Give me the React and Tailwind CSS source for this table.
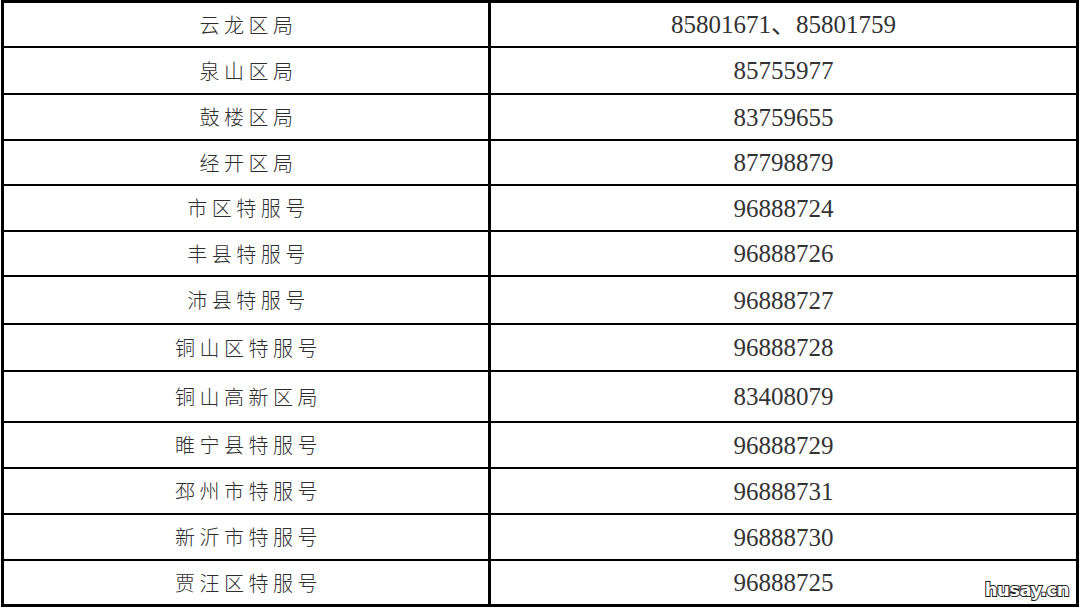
import React from 'react';

// 徐州各区局服务电话
const rows = [
  { name: '云龙区局', phone: '85801671、85801759', h: 'h-[43px]' },
  { name: '泉山区局', phone: '85755977', h: 'h-[47px]' },
  { name: '鼓楼区局', phone: '83759655', h: 'h-[46px]' },
  { name: '经开区局', phone: '87798879', h: 'h-[45px]' },
  { name: '市区特服号', phone: '96888724', h: 'h-[46px]' },
  { name: '丰县特服号', phone: '96888726', h: 'h-[45px]' },
  { name: '沛县特服号', phone: '96888727', h: 'h-[48px]' },
  { name: '铜山区特服号', phone: '96888728', h: 'h-[47px]' },
  { name: '铜山高新区局', phone: '83408079', h: 'h-[51px]' },
  { name: '睢宁县特服号', phone: '96888729', h: 'h-[46px]' },
  { name: '邳州市特服号', phone: '96888731', h: 'h-[46px]' },
  { name: '新沂市特服号', phone: '96888730', h: 'h-[46px]' },
  { name: '贾汪区特服号', phone: '96888725', h: 'h-[45px]' },
];

export default function App() {
  return (
    <div className="relative w-[1080px] h-[609px] bg-white overflow-hidden">
      <div className="ml-[1px] w-[1078px] h-[607px] border-[3px] border-black flex flex-col">
        {rows.map((row, i) => (
          <div
            key={row.name}
            className={`flex ${row.h} ${i > 0 ? 'border-t-2 border-black' : ''}`}
          >
            <div className="w-[487px] flex-shrink-0 border-r-[3px] border-black flex items-center justify-center pl-[5px]">
              <span className="font-['Noto_Sans_CJK_SC',sans-serif] font-light text-[20px] tracking-[4.5px] text-[#2e2e2e] leading-none">
                {row.name}
              </span>
            </div>
            <div className="flex-1 flex items-center justify-center">
              <span className="font-['Liberation_Serif','Noto_Sans_CJK_SC',serif] text-[25px] text-[#333333] leading-none">
                {row.phone}
              </span>
            </div>
          </div>
        ))}
      </div>

      {/* watermark */}
      <div className="absolute right-[11px] bottom-[10px] font-['DejaVu_Sans',sans-serif] font-bold text-[18px] leading-none tracking-[-0.5px] text-white [-webkit-text-stroke:2px_#222] [paint-order:stroke_fill]">
        husay.cn
      </div>
    </div>
  );
}
